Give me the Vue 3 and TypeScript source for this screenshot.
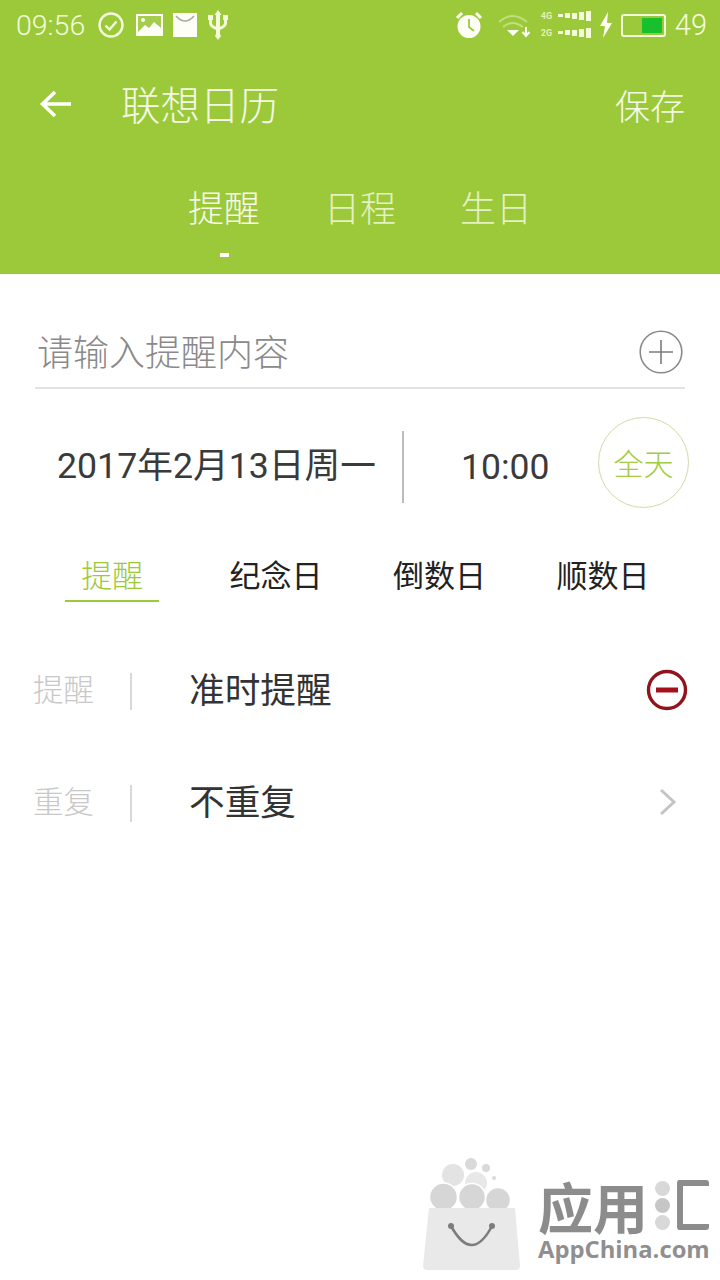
<script setup lang="ts">
const tabs = [
  { label: '提醒', active: true },
  { label: '日程', active: false },
  { label: '生日', active: false },
]
const kinds = [
  { label: '提醒', active: true },
  { label: '纪念日', active: false },
  { label: '倒数日', active: false },
  { label: '顺数日', active: false },
]
</script>

<template>
  <div class="page">
    <header class="head">
      <div class="status">
        <span class="clock">09:56</span>
        <svg class="ic" width="26" height="26" viewBox="0 0 26 26"><circle cx="13" cy="13" r="11.5" fill="none" stroke="#f4fbdc" stroke-width="2.4"/><path d="M7.5 13.5l4 4 7-8" fill="none" stroke="#f4fbdc" stroke-width="2.4"/></svg>
        <svg class="ic pic" width="27" height="22" viewBox="0 0 27 22"><rect width="27" height="22" fill="#fdfef6"/><rect x="2" y="2" width="23" height="16" fill="#a5cc4c"/><path d="M2 18l7-7 4 3 5-6 7 6v4z" fill="#fdfef6"/><circle cx="7" cy="6" r="2" fill="#fdfef6"/></svg>
        <svg class="ic bag" width="24" height="24" viewBox="0 0 24 24"><rect width="24" height="24" fill="#fdfef6"/><path d="M3 3q9 10 18 0" fill="none" stroke="#a9a9a0" stroke-width="1.6"/></svg>
        <svg class="usb" width="22" height="30" viewBox="0 0 22 30"><path d="M11 0l3.500 5H13v19l1 2-3 4-3-4 1-2V5H7.500z" fill="#f4fbdc"/><path d="M3.500 9v4q0 4 7.500 6 7.500-2 7.500-6V9" fill="none" stroke="#f4fbdc" stroke-width="3"/><rect x="1" y="5" width="5" height="5" fill="#f4fbdc"/><rect x="16" y="5" width="5" height="5" fill="#f4fbdc"/></svg>
        <span class="grow"></span>
        <svg class="ic" width="28" height="28" viewBox="0 0 28 28"><circle cx="14" cy="15.500" r="11.500" fill="#fdfef6"/><path d="M14 8v8l5 4" fill="none" stroke="#9bc93a" stroke-width="1.800"/><path d="M2 7l5-5M26 7l-5-5" stroke="#fdfef6" stroke-width="3"/></svg>
        <svg class="wifi" width="34" height="28" viewBox="0 0 34 28"><path d="M2 11Q15-1 30 11M6 16q9-8 20 0" fill="none" stroke="#c2de7d" stroke-width="2"/><path d="M10 19h12l-6 6z" fill="#fdfef6"/><path d="M29 16v8M25.500 21l3.500 4 3.500-4" fill="none" stroke="#fdfef6" stroke-width="2"/></svg>
        <div class="signal">
          <div class="sig-row" v-for="n in ['4G', '2G']" :key="n">
            <span class="net">{{ n }}</span><i class="b1"></i><i class="b2"></i><i class="b3"></i><i class="b4"></i><i class="b5"></i>
          </div>
        </div>
        <svg class="bolt" width="14" height="26" viewBox="0 0 14 26"><path d="M9 0L1 14h5l-2 12 9-15H8z" fill="#fdfef6"/></svg>
        <div class="battery"><div class="cell"></div></div>
        <span class="level">49</span>
      </div>

      <div class="title-row">
        <svg class="back" width="34" height="30" viewBox="0 0 34 30"><path d="M32 15H4M16 3L3.500 15 16 27" fill="none" stroke="#fff" stroke-width="3.600"/></svg>
        <span class="title">联想日历</span>
        <span class="save">保存</span>
      </div>

      <nav class="tabs">
        <div v-for="t in tabs" :key="t.label" class="tab" :class="{ on: t.active }">
          {{ t.label }}
          <i v-if="t.active" class="dash"></i>
        </div>
      </nav>
    </header>

    <main class="body">
      <div class="input-row">
        <span class="placeholder">请输入提醒内容</span>
        <svg width="44" height="44" viewBox="0 0 44 44"><circle cx="22" cy="22" r="20.800" fill="none" stroke="#8a8a8a" stroke-width="1.600"/><path d="M10 22h24M22 10v24" stroke="#7c7c7c" stroke-width="1.600"/></svg>
      </div>

      <div class="date-row">
        <span class="date">2017年2月13日周一</span>
        <i class="vline"></i>
        <span class="time">10:00</span>
        <div class="allday">全天</div>
      </div>

      <div class="kinds">
        <div v-for="k in kinds" :key="k.label" class="kind" :class="{ on: k.active }">{{ k.label }}</div>
      </div>

      <div class="row">
        <span class="key">提醒</span>
        <i class="sep"></i>
        <span class="val">准时提醒</span>
        <svg class="end" width="42" height="42" viewBox="0 0 42 42"><circle cx="21" cy="21" r="18.500" fill="none" stroke="#8f141c" stroke-width="3.400"/><rect x="10" y="18.500" width="22" height="5" fill="#a3101a"/></svg>
      </div>
      <div class="row">
        <span class="key">重复</span>
        <i class="sep"></i>
        <span class="val">不重复</span>
        <svg class="end" width="42" height="32" viewBox="0 0 42 32"><path d="M15 4l13 12-13 12" fill="none" stroke="#c4c4c4" stroke-width="3"/></svg>
      </div>
    </main>

    <div class="mark">
      <svg width="104" height="118" viewBox="0 0 104 118">
        <circle cx="31" cy="19" r="11" fill="#e3e3e3"/>
        <circle cx="49" cy="8" r="6" fill="#d9d9d9"/>
        <circle cx="64" cy="12" r="4" fill="#d9d9d9"/>
        <circle cx="72" cy="22" r="2" fill="#d9d9d9"/>
        <circle cx="54" cy="27" r="11" fill="#e8e8e8"/>
        <circle cx="21.500" cy="41" r="14" fill="#d6d6d6" stroke="#fff" stroke-width="1.500"/>
        <circle cx="50" cy="41" r="13.500" fill="#d6d6d6" stroke="#fff" stroke-width="1.500"/>
        <circle cx="76" cy="44" r="12.500" fill="#d6d6d6" stroke="#fff" stroke-width="1.500"/>
        <path d="M7 52h86l5 58q0 4-5 4H6q-5 0-5-4z" fill="#e9e9e9"/>
        <path d="M29 70q21 38 41 0" fill="none" stroke="#7d7d7d" stroke-width="2.600"/>
        <circle cx="29" cy="70" r="3" fill="#7d7d7d"/>
        <circle cx="70" cy="70" r="3" fill="#7d7d7d"/>
      </svg>
      <div class="brand">
        <div class="cn">
          <span>应用</span>
          <span class="dots"><i></i><i></i><i></i></span>
          <i class="kuang"></i>
        </div>
        <div class="en">AppChina.com</div>
      </div>
    </div>
  </div>
</template>

<style>
html, body { margin: 0; background: #fff; }
</style>

<style scoped>
.page {
  position: relative;
  width: 720px;
  height: 1280px;
  overflow: hidden;
  background: #fff;
  font-family: "Noto Sans CJK SC", "Roboto", sans-serif;
  font-weight: 300;
}
i { display: block; }
.head { height: 274px; background: #9bc93a; color: #fff; }
.status {
  display: flex;
  align-items: center;
  height: 50px;
  padding: 0 13px 0 16px;
  color: #f4fbdc;
}
.clock { font-family: Roboto, sans-serif; font-size: 28.500px; width: 82px; }
.ic { margin-right: 12px; flex: none; }
.pic { margin-right: 10px; }
.bag { margin-right: 10px; }
.grow { flex: 1; }
.wifi { margin: 0 10px 0 2px; }
.signal { display: flex; flex-direction: column; gap: 7px; width: 50px; margin-top: -2px; }
.sig-row { display: flex; align-items: center; gap: 2px; height: 10px; }
.net { font: 700 9px/10px Roboto, sans-serif; width: 16px; color: #e3f0b8; }
.sig-row i { background: #f4fbdc; width: 5px; }
.b1 { height: 3px; }
.b2 { height: 5px; }
.b3 { height: 6px; }
.b4 { height: 8px; }
.b5 { height: 10px; }
.bolt { margin: 0 8px 0 8px; }
.battery {
  border: 2px solid #f4fbdc;
  border-radius: 3px;
  display: flex;
  justify-content: flex-end;
  padding: 2px 2px;
  width: 37px;
  height: 15px;
}
.cell { width: 20px; height: 15px; background: #18c02e; }
.level { font-family: Roboto, sans-serif; font-size: 29px; margin-left: 9px; }

.title-row {
  display: flex;
  align-items: center;
  height: 108px;
  padding: 0 35px 0 39px;
}
.back { margin-right: 48px; }
.title { font-size: 39.500px; flex: 1; color: #f5fae6; line-height: 1; margin-top: -2px; }
.save { font-size: 35px; color: #f5fae6; line-height: 1; }
.tabs {
  display: flex;
  gap: 64px;
  padding-left: 188px;
  margin-top: 22px;
}
.tab {
  position: relative;
  font-size: 36px;
  line-height: 52px;
  color: #e4f1c0;
}
.tab.on { color: #f7fbe8; }
.dash {
  position: absolute;
  left: 32px;
  top: 73px;
  width: 9px;
  height: 4px;
  background: #fff;
}

.body { display: flex; flex-direction: column; }
.input-row {
  display: flex;
  align-items: center;
  justify-content: space-between;
  height: 71px;
  margin: 0 35px;
  padding: 42px 2px 0 2px;
  border-bottom: 2px solid #e2e2e2;
}
.placeholder { font-size: 36px; color: #8a8a8a; line-height: 1; margin-top: -4px; }
.date-row {
  display: flex;
  align-items: center;
  height: 118px;
  padding-left: 57px;
  margin-top: 19px;
  color: #333;
}
.date {
  font-size: 35.700px;
  width: 345px;
  line-height: 1;
  white-space: nowrap;
  font-family: Roboto, "Noto Sans CJK SC", sans-serif;
  font-weight: 400;
  color: #3a3a3a;
}
.vline { width: 2px; height: 72px; background: #bbb; }
.time {
  font-size: 35.500px;
  width: 194px;
  padding-left: 57px;
  box-sizing: border-box;
  font-family: Roboto, sans-serif;
  font-weight: 400;
  color: #3a3a3a;
}
.allday {
  width: 89px;
  height: 89px;
  border: 1px solid #cfdca6;
  border-radius: 50%;
  display: flex;
  align-items: center;
  justify-content: center;
  font-size: 30px;
  color: #a2cc44;
  margin-top: -10px;
}
.kinds {
  display: flex;
  padding-left: 65px;
  margin-top: 26px;
}
.kind {
  width: 164.500px;
  font-size: 31px;
  line-height: 44px;
  color: #222;
  font-weight: 400;
  white-space: nowrap;
}
.kind.on {
  width: 95px;
  padding-bottom: 4px;
  margin-right: 70px;
  border-bottom: 2px solid #9bc93a;
  color: #9bc93a;
  text-align: center;
  font-weight: 300;
}
.row {
  display: flex;
  align-items: center;
  height: 112px;
  padding: 0 32px 0 33px;
}
.kinds + .row { margin-top: 30px; }
.key { font-size: 30.500px; color: #c8c8c8; width: 97px; line-height: 1; }
.sep { width: 2px; height: 37px; background: #d8d8d8; margin: 6px 57px 0 0; }
.val { flex: 1; font-size: 35.700px; font-weight: 400; color: #333; line-height: 1; }
.end { margin-top: 4px; }

.mark {
  position: absolute;
  left: 422px;
  top: 1156px;
  display: flex;
  gap: 12px;
}
.brand { padding-top: 20px; }
.cn {
  display: flex;
  align-items: center;
  height: 58px;
  font-size: 55px;
  font-weight: 700;
  line-height: 58px;
  color: #8c8c8c;
}
.dots { display: flex; flex-direction: column; gap: 2px; margin-left: 7px; }
.dots i { width: 15px; height: 15px; border-radius: 50%; background: #d8d8d8; }
.dots i:nth-child(2) { background: #c6c6c6; }
.kuang {
  width: 26px;
  height: 38px;
  border: 6px solid #8c8c8c;
  border-right: 0;
  border-radius: 3px;
  margin-left: 7px;
}
.en {
  font-family: "Open Sans", sans-serif;
  font-weight: 700;
  font-size: 23.800px;
  line-height: 24px;
  color: #8f8f8f;
  margin-top: 3px;
  white-space: nowrap;
}
</style>
